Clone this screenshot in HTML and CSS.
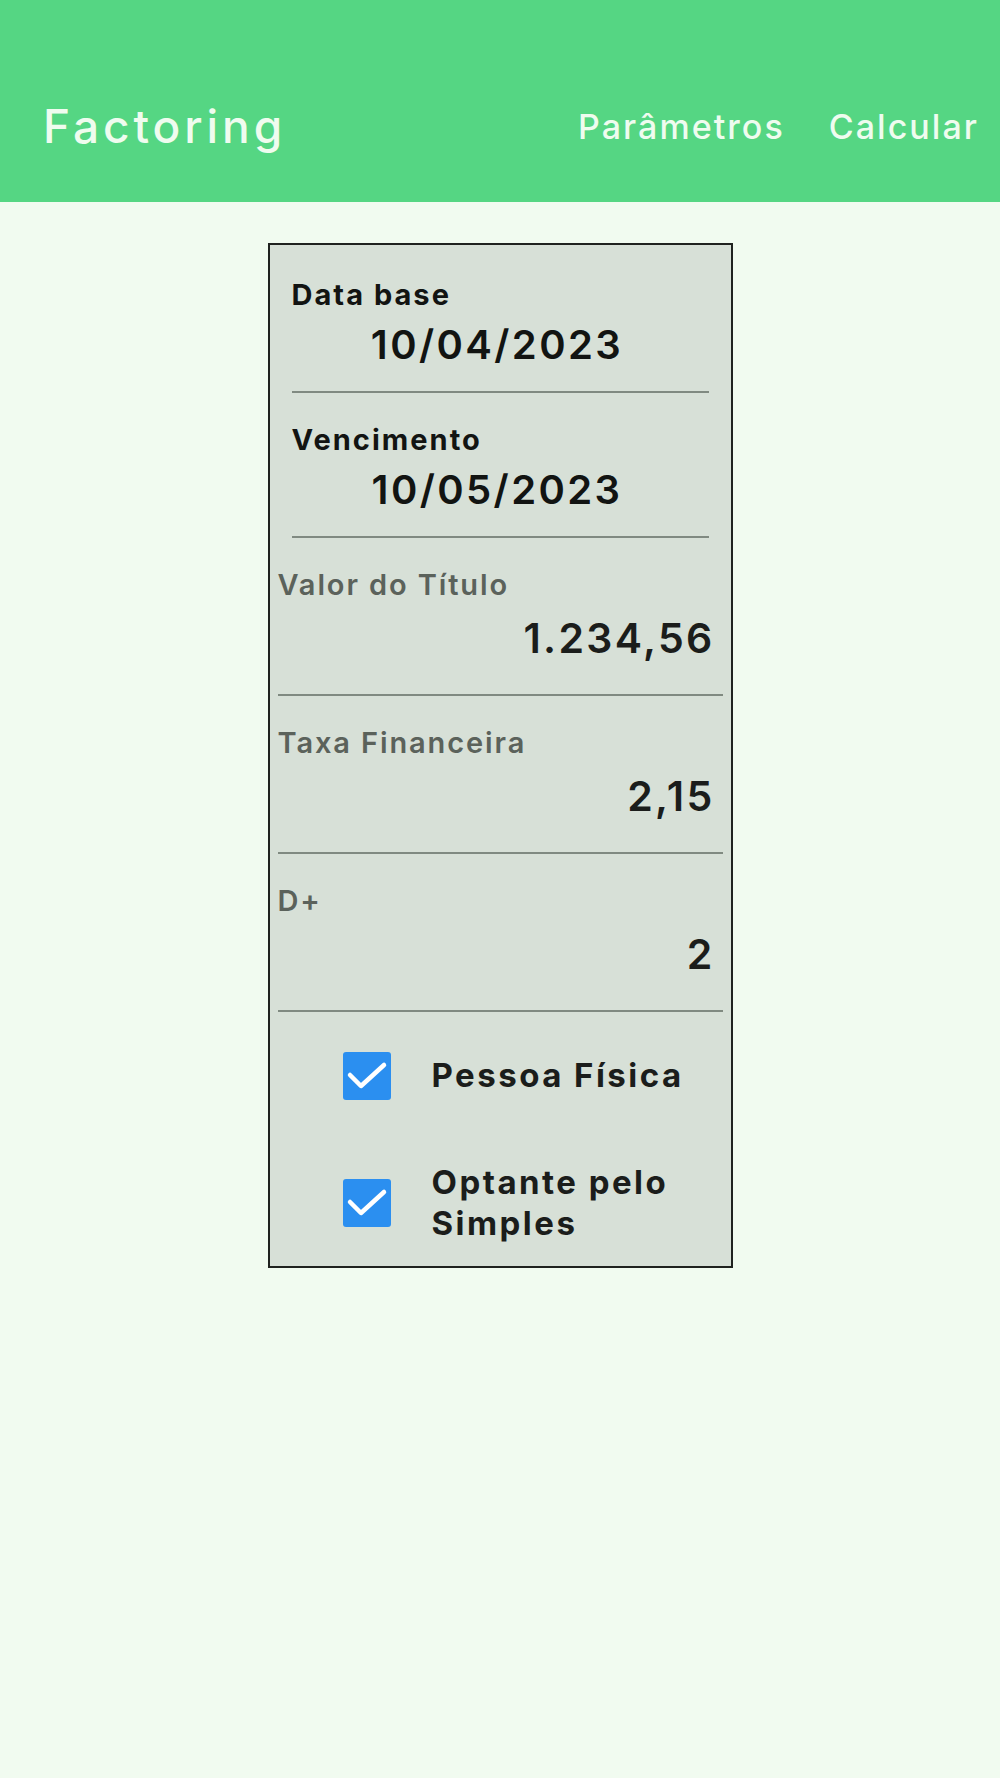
FILE: index.html
```html
<!DOCTYPE html>
<html>
<head>
  <title>Factoring</title>
  <link rel="stylesheet" href="styles.css">
</head>
<body>
  <header class="topbar">
    <div class="brand">Factoring</div>
    <nav class="menu">
      <a href="#">Parâmetros</a>
      <a href="#">Calcular</a>
    </nav>
  </header>

  <main class="page">
    <form class="card">
      <div class="date-field">
        <div class="date-label">Data base</div>
        <div class="date-value">10/04/2023</div>
      </div>
      <div class="date-field">
        <div class="date-label">Vencimento</div>
        <div class="date-value">10/05/2023</div>
      </div>

      <div class="num-field">
        <div class="num-label">Valor do Título</div>
        <div class="num-value">1.234,56</div>
      </div>
      <div class="num-field">
        <div class="num-label">Taxa Financeira</div>
        <div class="num-value">2,15</div>
      </div>
      <div class="num-field">
        <div class="num-label">D+</div>
        <div class="num-value">2</div>
      </div>

      <div class="options">
        <label class="option">
          <span class="check">
            <svg viewBox="0 0 48 48" width="48" height="48"><polyline points="7,23 18,34 41,13" fill="none" stroke="#ffffff" stroke-width="4.5" stroke-linecap="round" stroke-linejoin="round"/></svg>
          </span>
          <span class="option-text">Pessoa Física</span>
        </label>
        <label class="option">
          <span class="check">
            <svg viewBox="0 0 48 48" width="48" height="48"><polyline points="7,23 18,34 41,13" fill="none" stroke="#ffffff" stroke-width="4.5" stroke-linecap="round" stroke-linejoin="round"/></svg>
          </span>
          <span class="option-text">Optante pelo Simples</span>
        </label>
      </div>
    </form>
  </main>
</body>
</html>
```

FILE: styles.css
```css
body {
  font-family: Inter, 'Noto Sans', sans-serif;
  background-color: #f1fbf0;
  margin: 0;
  padding: 0;
  color: #1b1d1b;
  letter-spacing: 0.07em;
}

.topbar {
  height: 202px;
  box-sizing: border-box;
  padding: 50px 21px 0 43px;
  background-color: #55d683;
  display: flex;
  justify-content: space-between;
  align-items: center;
  color: #effcef;
}

.brand {
  font-size: 46px;
  font-weight: 500;
  letter-spacing: 0.085em;
}

.menu {
  display: flex;
  gap: 44px;
}

.menu a {
  color: #effcef;
  text-decoration: none;
  font-size: 34px;
  font-weight: 500;
  letter-spacing: 0.06em;
}

.page {
  padding-top: 41px;
}

.card {
  width: 465px;
  box-sizing: border-box;
  margin: 0 auto;
  padding-top: 3px;
  background-color: #d7e0d7;
  border: 2px solid #1f221f;
}

.date-field {
  margin: 0 22px;
  padding: 30px 0 22px;
  border-bottom: 2px solid #808a81;
}

.date-label {
  font-size: 29px;
  line-height: 34px;
  font-weight: 700;
  letter-spacing: 0.07em;
  color: #121412;
}

.date-value {
  margin-top: 9px;
  padding-right: 6px;
  font-size: 40px;
  line-height: 48px;
  font-weight: 600;
  letter-spacing: 0.06em;
  text-align: center;
  color: #121412;
}

.num-field {
  margin: 0 8px;
  padding: 30px 8px 32px 0;
  border-bottom: 2px solid #808a81;
}

.num-label {
  font-size: 29px;
  line-height: 34px;
  font-weight: 600;
  letter-spacing: 0.065em;
  color: #5b625b;
}

.num-value {
  margin-top: 12px;
  font-size: 41px;
  line-height: 48px;
  font-weight: 600;
  letter-spacing: 0.056em;
  text-align: right;
}

.options {
  padding: 0 6px 0 73px;
}

.option {
  height: 127px;
  display: flex;
  align-items: center;
  gap: 41px;
}

.check {
  width: 48px;
  height: 48px;
  flex-shrink: 0;
  border-radius: 3px;
  background-color: #2b8ff0;
}

.check svg {
  display: block;
}

.option-text {
  font-size: 33px;
  line-height: 41px;
  font-weight: 700;
  letter-spacing: 0.075em;
}
```
